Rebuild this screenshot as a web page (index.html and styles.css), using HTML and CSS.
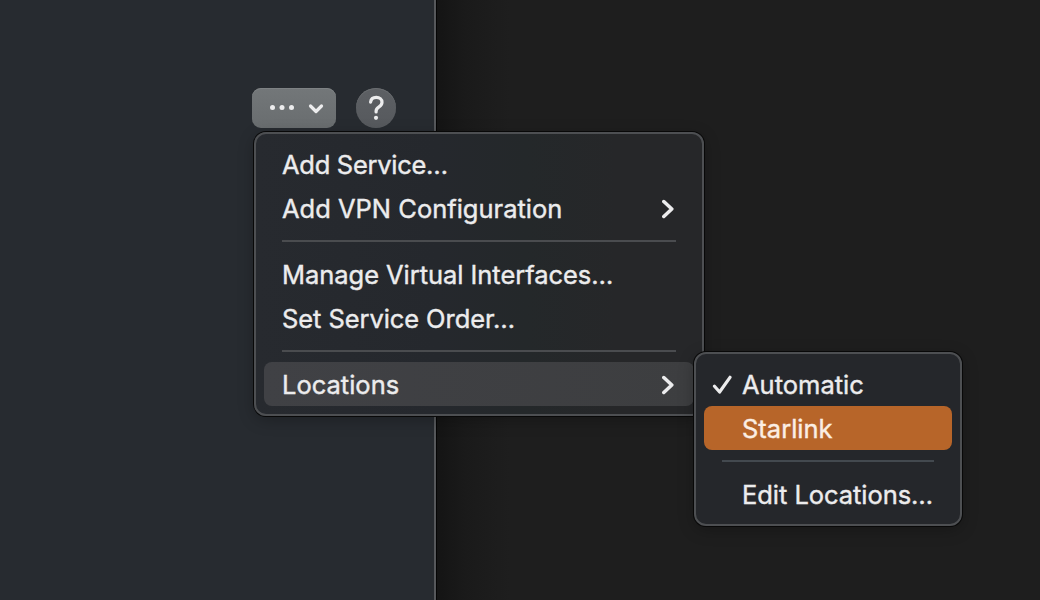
FILE: index.html
```html
<!DOCTYPE html>
<html lang="en">
<head>
  <meta charset="UTF-8" />
  <meta name="viewport" content="width=device-width, initial-scale=1.0" />
  <title>Network</title>
  <link rel="stylesheet" href="styles.css">
</head>
<body>
  <main class="panel">
    <div class="toolbar">
      <button type="button" class="more-button" aria-label="More">
        <svg width="84" height="40" viewBox="0 0 84 40">
          <circle cx="20.5" cy="19.5" r="2.5" />
          <circle cx="30" cy="19.5" r="2.5" />
          <circle cx="39.5" cy="19.5" r="2.5" />
          <path d="M58.5 18l5.5 5.5 5.5-5.5" />
        </svg>
      </button>
      <button type="button" class="help-button" aria-label="Help">
        <svg width="40" height="40" viewBox="0 0 40 40">
          <path d="M14.6 14.2c.3-3.1 2.500-4.900 5.700-4.900 3.300 0 5.700 2 5.700 4.900 0 2.200-1.100 3.500-3 4.700-2.100 1.300-2.900 2.200-2.900 4.200v.8" />
          <circle cx="20" cy="29.800" r="2.100" />
        </svg>
      </button>
    </div>
  </main>

  <!-- Main menu -->
  <div class="menu main-menu" role="menu">
    <div class="item add-service" role="menuitem"><span>Add Service…</span></div>
    <div class="item" role="menuitem">
      <span>Add VPN Configuration</span>
      <svg class="arrow" width="14" height="20" viewBox="0 0 14 20"><path d="M1.800 2.500L9.800 10l-8 7.500" /></svg>
    </div>
    <hr>
    <div class="item manage" role="menuitem"><span>Manage Virtual Interfaces…</span></div>
    <div class="item order" role="menuitem"><span>Set Service Order…</span></div>
    <hr>
    <div class="item open" role="menuitem">
      <span>Locations</span>
      <svg class="arrow" width="14" height="20" viewBox="0 0 14 20"><path d="M1.800 2.500L9.800 10l-8 7.500" /></svg>
    </div>
  </div>

  <!-- Locations submenu -->
  <div class="menu sub-menu" role="menu">
    <div class="item automatic" role="menuitem">
      <svg class="check" width="20" height="20" viewBox="0 0 20 20"><path d="M2.500 11.300l5.100 5.700L18 2.300" /></svg>
      <span>Automatic</span>
    </div>
    <div class="item selected" role="menuitem"><span>Starlink</span></div>
    <hr>
    <div class="item edit" role="menuitem"><span>Edit Locations…</span></div>
  </div>
</body>
</html>
```

FILE: styles.css
```css
* { box-sizing: border-box; margin: 0; padding: 0; }
body { width: 1040px; height: 600px; overflow: hidden; font-family: Inter, "Liberation Sans", sans-serif; color: #ececed; background: linear-gradient(90deg, #141414 436px, #1a1a1a 465px, #1e1e1e 510px); }
svg { display: block; }
path { fill: none; stroke: #ececed; stroke-linecap: round; stroke-linejoin: round; }
circle { fill: #ececed; }

.panel { width: 436px; height: 600px; padding: 88px 0 0 252px; background: #272b30; border-right: 2px solid #56585b; box-shadow: 1px 0 0 #050505; }
.toolbar { display: flex; gap: 20px; }
button { height: 40px; border: none; }
.more-button { width: 84px; border-radius: 9px; background: linear-gradient(#737779, #696d6f); box-shadow: inset 0 1px 0 #7e8284; }
.more-button path { stroke-width: 3.2; }
.help-button { width: 40px; border-radius: 50%; background: linear-gradient(#5d6064, #56595d); box-shadow: inset 0 1px 0 #6a6d70; }
.help-button path { stroke-width: 3.2; }

.menu { position: absolute; padding: 8px; border: 2px solid #4d4f52; border-radius: 12px; background: #25272b; box-shadow: 0 0 0 1px #080808, 0 4px 16px rgba(0, 0, 0, 0.25); }
.main-menu { left: 254px; top: 132px; width: 450px; background: linear-gradient(90deg, #272a2f, #25282d 180px, #24282a 270px, #262729 360px); }
.sub-menu { left: 694px; top: 352px; width: 268px; }
.item { display: flex; align-items: center; height: 44px; padding: 2px 18px 0; border-radius: 8px; font-size: 25.5px; line-height: 42px; white-space: nowrap; -webkit-text-stroke: 0.4px currentColor; }
.item .arrow { margin-left: auto; }
.arrow path { stroke-width: 3.5; }
.add-service { letter-spacing: -0.28px; }
.manage, .edit { letter-spacing: -0.05px; }
.order { letter-spacing: -0.08px; }
.open { background: linear-gradient(90deg, #404145, #3d3e40); }
hr { height: 2px; margin: 10px 18px; border: none; background: #4a4c4f; }
.sub-menu .item { padding-left: 38px; }
.sub-menu .automatic { padding-left: 8px; gap: 10px; }
.check path { stroke-width: 3.2; }
.sub-menu .selected { background: #b76529; color: #fbeee3; }
.sub-menu hr { background: #43494f; }
```
